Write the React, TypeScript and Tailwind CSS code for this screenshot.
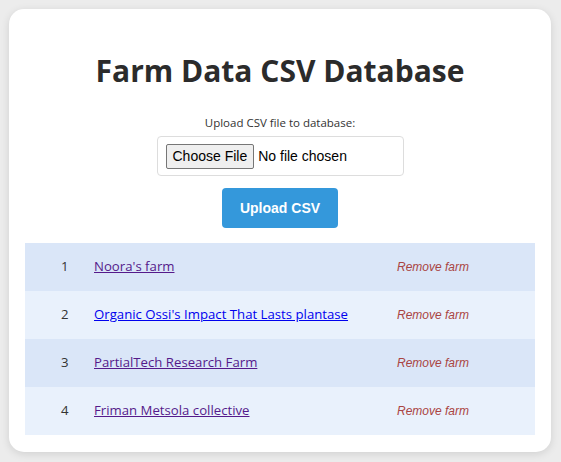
import { useState } from 'react';

const farms = [
  { id: 1, name: "Noora's farm", visited: true },
  { id: 2, name: "Organic Ossi's Impact That Lasts plantase", visited: false },
  { id: 3, name: 'PartialTech Research Farm', visited: true },
  { id: 4, name: 'Friman Metsola collective', visited: true },
];

export default function App() {
  const [rows, setRows] = useState(farms);

  return (
    <div className="min-h-[462px] bg-[#ececec] p-[9px] font-['Open_Sans',sans-serif] text-[#333]">
      <div className="w-[542px] rounded-[15px] bg-white px-4 pb-[17px] pt-[36px] shadow-[0_2px_8px_rgba(0,0,0,0.12)]">
        <h1 className="text-center text-[30px] font-bold leading-[52px] text-[#2b2b2b]">
          Farm Data CSV Database
        </h1>

        <form className="mt-[18px] flex flex-col items-center" onSubmit={(e) => e.preventDefault()}>
          <label className="text-[11.5px] leading-[16px] text-[#333]">
            Upload CSV file to database:
          </label>
          <div className="mt-[5px] flex h-[40px] w-[247px] items-center rounded-[4px] border border-[#ddd] px-2">
            <input
              type="file"
              accept=".csv"
              className="font-['Liberation_Sans',sans-serif] text-[14px] text-black file:mr-1 file:rounded-[2px] file:border file:border-[#767676] file:bg-[#efefef] file:px-[6px] file:py-[1px] file:text-[14px] file:text-black"
            />
          </div>
          <button
            type="submit"
            className="mt-3 h-[40px] w-[116px] rounded-[4px] bg-[#3498db] font-['Liberation_Sans',sans-serif] text-[14px] font-bold text-white"
          >
            Upload CSV
          </button>
        </form>

        <table className="mt-[15px] w-full border-collapse text-[13.2px]">
          <tbody>
            {rows.map((f, i) => (
              <tr key={f.id} className={i % 2 === 0 ? 'h-[48px] bg-[#dae6f8]' : 'h-[48px] bg-[#e9f1fc]'}>
                <td className="w-[69px] pl-[36px] text-[#333]">{f.id}</td>
                <td>
                  <a
                    href="#"
                    className={f.visited ? 'text-[#551a8b] underline' : 'text-[#0000ee] underline'}
                  >
                    {f.name}
                  </a>
                </td>
                <td className="w-[138px]">
                  <button
                    className="font-['Liberation_Sans',sans-serif] text-[12px] italic text-[#a94442]"
                    onClick={() => setRows(rows.filter((r) => r.id !== f.id))}
                  >
                    Remove farm
                  </button>
                </td>
              </tr>
            ))}
          </tbody>
        </table>
      </div>
    </div>
  );
}
